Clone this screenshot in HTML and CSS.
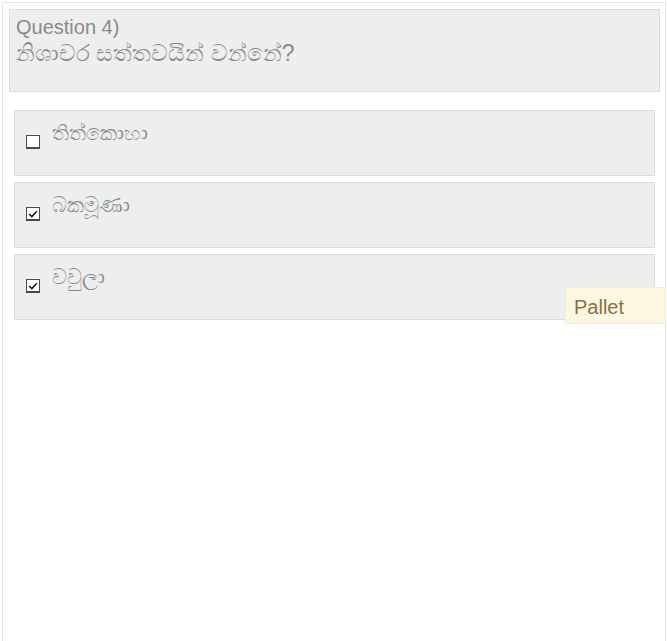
FILE: index.html
```html
<!DOCTYPE html>
<html lang="si">
<head>
<meta charset="utf-8">
<title>Question 4</title>
<link rel="stylesheet" href="styles.css">
</head>
<body>
<div class="frame">
  <div class="question">
    <div class="q-num">Question 4)</div>
    <div class="q-text">නිශාචර සත්තවයින් වන්නේ?</div>
  </div>
  <div class="answers">
    <label class="answer">
      <span class="box"></span>
      <span class="answer-text">තිත්කොහා</span>
    </label>
    <label class="answer">
      <span class="box checked"><svg viewBox="0 0 12 12" width="12" height="12"><path d="M2.2 6 L4.8 8.6 L9.8 3.2" fill="none" stroke="#111" stroke-width="1.5"/></svg></span>
      <span class="answer-text">බකමූණා</span>
    </label>
    <label class="answer">
      <span class="box checked"><svg viewBox="0 0 12 12" width="12" height="12"><path d="M2.2 6 L4.8 8.6 L9.8 3.2" fill="none" stroke="#111" stroke-width="1.5"/></svg></span>
      <span class="answer-text">වවුලා</span>
    </label>
  </div>
  <div class="pallet">Pallet</div>
</div>
</body>
</html>
```
FILE: styles.css
```css
html, body {
  margin: 0;
  padding: 0;
  background: #fff;
}

body {
  font-family: "Liberation Sans", Arial, sans-serif;
  color: #888;
}

.frame {
  position: relative;
  margin: 2px 1px 0 2px;
  height: calc(100vh - 3px);
  border: 1px solid #e6e6e6;
  border-bottom: none;
  padding: 6px 5px 0 6px;
}

.question {
  background: #eee;
  border: 1px solid #dcdcdc;
  height: 76px;
  padding: 5px 6px 0 6px;
  font-size: 20px;
  line-height: 24px;
  color: #8a8a8a;
}

.q-text {
  font-size: 23px;
  line-height: 26px;
  margin-top: 1px;
}

.answers {
  margin: 18px 5px 0 5px;
  display: flex;
  flex-direction: column;
  gap: 6px;
}

.answer {
  display: flex;
  align-items: flex-start;
  height: 64px;
  background: #eee;
  border: 1px solid #dcdcdc;
  padding: 0 0 0 11px;
}

.box {
  width: 12px;
  height: 11px;
  margin-top: 24px;
  margin-right: 12px;
  border: 1px solid #4a4a4a;
  border-bottom-width: 2px;
  background: #fff;
  display: flex;
  align-items: center;
  justify-content: center;
  flex: none;
}

.box svg {
  display: block;
}

.answer-text {
  font-size: 21px;
  line-height: 26px;
  margin-top: 9px;
  color: #888;
}

.pallet {
  position: absolute;
  top: 284px;
  right: -1px;
  width: 91px;
  height: 35px;
  padding-left: 8px;
  background: #fdf6e1;
  border: 1px solid #f6ecd0;
  color: #8c6e4c;
  font-size: 20px;
  line-height: 38px;
}
```
